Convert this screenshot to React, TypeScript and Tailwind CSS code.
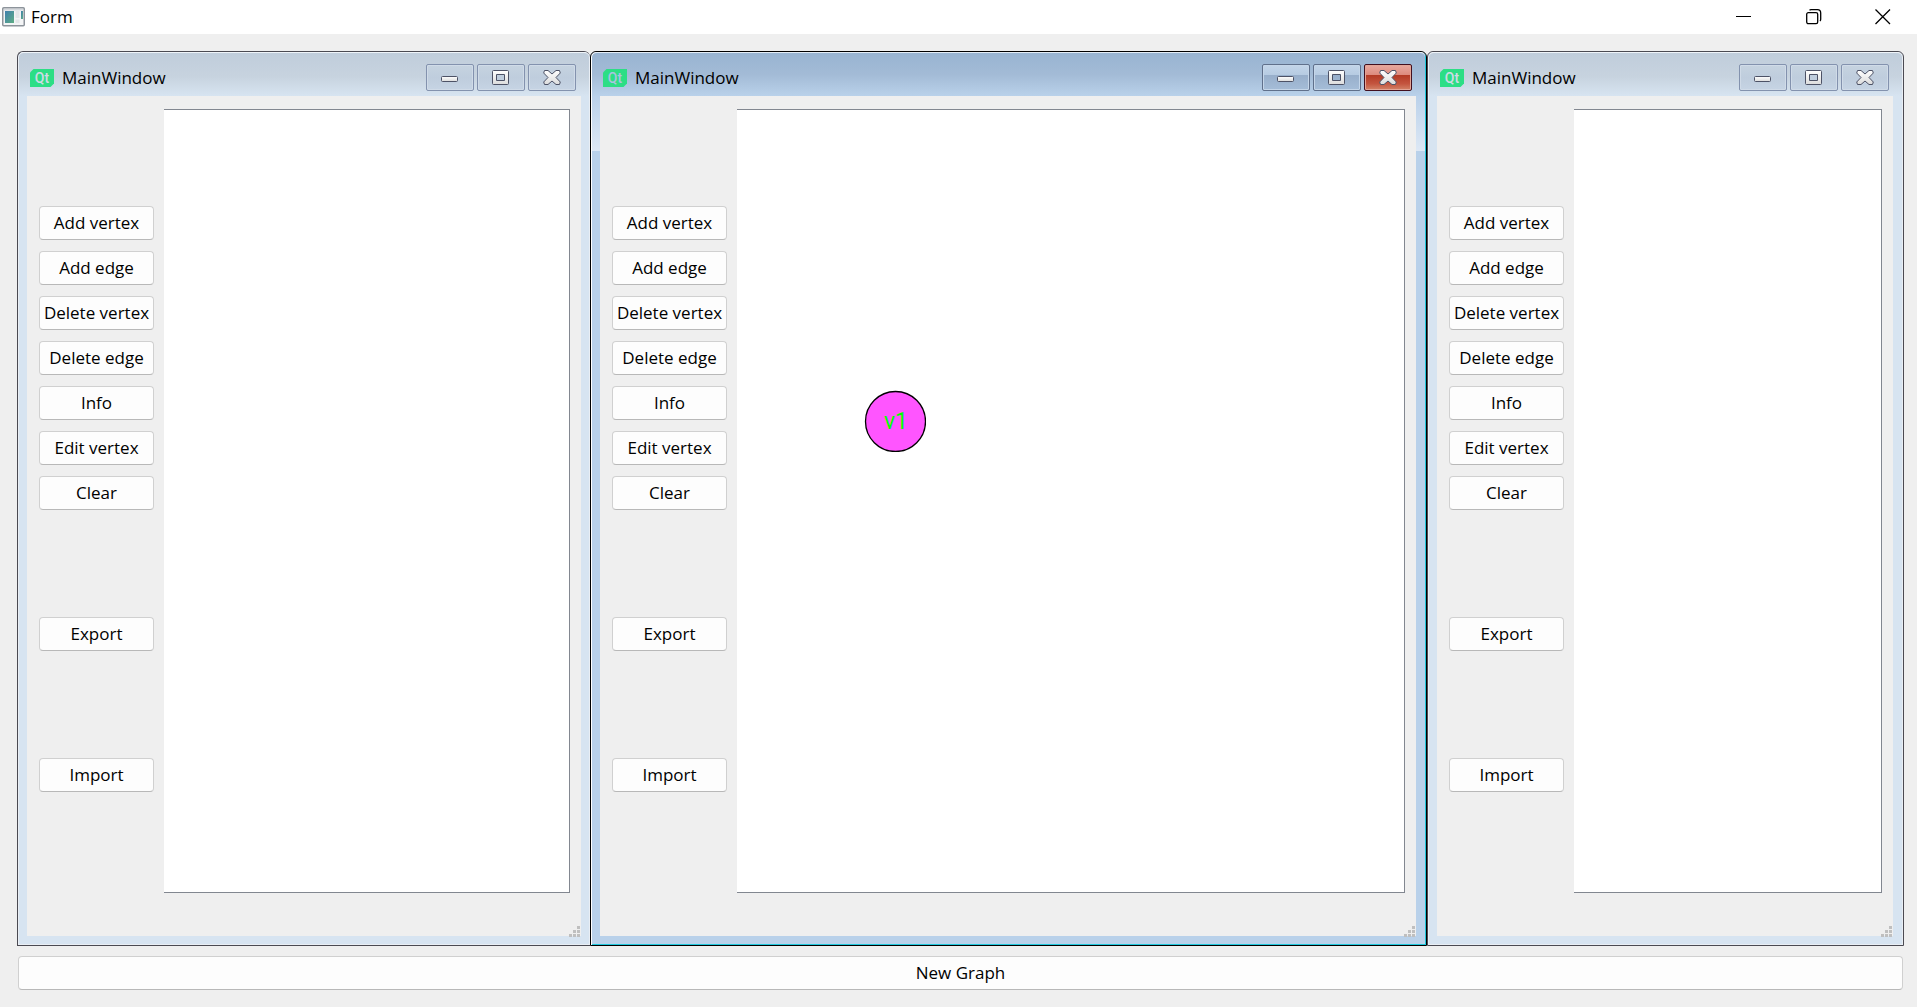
import React from "react";

type Tone = "active" | "inactive";

const editActions = [
  "Add vertex",
  "Add edge",
  "Delete vertex",
  "Delete edge",
  "Info",
  "Edit vertex",
  "Clear",
];

function PushButton({ children }: { children: React.ReactNode }) {
  return (
    <button
      type="button"
      className="h-[34px] w-full shrink-0 rounded border border-[#d0d0d0] border-b-[#b8b8b8] bg-[#fdfdfd] text-center text-[17px] leading-8 whitespace-nowrap text-black"
    >
      {children}
    </button>
  );
}

function FormIcon() {
  return (
    <svg width="24" height="20" viewBox="0 0 24 20" aria-hidden="true">
      <defs>
        <linearGradient id="formPane" x1="0" y1="0" x2="1" y2="1">
          <stop offset="0" stopColor="#3f7fae" />
          <stop offset="1" stopColor="#5fae84" />
        </linearGradient>
      </defs>
      <rect x="0.75" y="0.75" width="21.5" height="18" rx="1" fill="#f4f5f6" stroke="#8d949b" strokeWidth="1.5" />
      <rect x="2" y="2" width="19" height="1.5" fill="#d4d8dc" />
      <rect x="3" y="4" width="9" height="12" fill="url(#formPane)" />
      <rect x="13.5" y="4" width="4" height="7" fill="#e3e6e8" />
      <rect x="19" y="4" width="2" height="8" fill="url(#formPane)" />
      <rect x="13.5" y="12.5" width="4" height="3.5" fill="#e3e6e8" />
    </svg>
  );
}

function FormTitleBar() {
  return (
    <header className="flex h-[34px] shrink-0 items-center bg-white pl-[2px]">
      <FormIcon />
      <h1 className="ml-[5px] flex-1 text-[17px] leading-6 text-black">Form</h1>
      <button type="button" aria-label="Minimize" className="flex h-full w-[70px] items-center justify-center">
        <svg width="16" height="16" viewBox="0 0 16 16">
          <path d="M0 7.5H15" stroke="#000" />
        </svg>
      </button>
      <button type="button" aria-label="Restore" className="flex h-full w-[70px] items-center justify-center">
        <svg width="16" height="16" viewBox="0 0 16 16" fill="none" stroke="#000" strokeWidth="1.3">
          <rect x="0.7" y="3.7" width="11" height="11" rx="1.6" />
          <path d="M3.5 1.2C4 0.8 4.4 0.7 5 0.7H11.5C13.5 0.7 14.7 2 14.7 4V10.3C14.7 11 14.5 11.6 14 12" />
        </svg>
      </button>
      <button type="button" aria-label="Close" className="flex h-full w-[68px] items-center justify-center">
        <svg width="16" height="16" viewBox="0 0 16 16">
          <path d="M0.5 0.5L15 15M15 0.5L0.5 15" stroke="#000" strokeWidth="1.3" />
        </svg>
      </button>
    </header>
  );
}

function QtIcon({ tone }: { tone: Tone }) {
  return (
    <svg width="24" height="18" viewBox="0 0 24 18" aria-hidden="true">
      <path d="M3.5 0H24V14.5L20.5 18H0V3.5Z" fill="#2cde85" />
      <text
        x="12"
        y="14"
        textAnchor="middle"
        fontFamily="Roboto, sans-serif"
        fontSize="14"
        fontWeight="500"
        fill={tone === "active" ? "#a8c4df" : "#cfdae6"}
      >
        Qt
      </text>
    </svg>
  );
}

function GlyphGradient({ id }: { id: string }) {
  return (
    <defs>
      <linearGradient id={id} x1="0" y1="0" x2="0" y2="1">
        <stop offset="0" stopColor="#ffffff" />
        <stop offset="1" stopColor="#dcdcdc" />
      </linearGradient>
    </defs>
  );
}

function CaptionGlyph({ kind, id }: { kind: "min" | "max" | "close"; id: string }) {
  const fill = `url(#${id})`;
  return (
    <svg width="18" height="17" viewBox="0 0 18 17" stroke="#4d5266" strokeWidth="1">
      <GlyphGradient id={id} />
      {kind === "min" && <rect x="0.5" y="7.5" width="16" height="5" rx="1" fill={fill} />}
      {kind === "max" && (
        <path
          d="M1.5 1.5H15.5Q16.5 1.5 16.5 2.5V14.5Q16.5 15.5 15.5 15.5H1.5Q0.5 15.5 0.5 14.5V2.5Q0.5 1.5 1.5 1.5ZM4.5 5.5V11.5H12.5V5.5Z"
          fillRule="evenodd"
          fill={fill}
        />
      )}
      {kind === "close" && (
        <path
          d="M1.5 1.5H5L9 5L13 1.5H16.5L17.3 4L13 8.5L17.3 13L16.5 15.5H13L9 12L5 15.5H1.5L0.7 13L5 8.5L0.7 4Z"
          strokeLinejoin="round"
          fill={fill}
        />
      )}
    </svg>
  );
}

const captionStyles = {
  inactive:
    "border-[#8392ae] bg-[linear-gradient(#c6d3e0,#bfcddd_50%,#c6d4e4)] shadow-[inset_0_0_0_1px_#d0dbe8]",
  active:
    "border-[#60708b] bg-[linear-gradient(#c3d5e9,#b6cbe2_40%,#98afcb_42%,#a5bdd8)] shadow-[inset_0_0_0_1px_#c5d6e9]",
  close:
    "border-[#43101f] bg-[linear-gradient(#e9a99f,#dd8a7d_40%,#b43b26_42%,#c4553f_75%,#d38468)] shadow-[inset_0_0_0_1px_#e3a597]",
};

function CaptionButton({ kind, tone, id }: { kind: "min" | "max" | "close"; tone: Tone; id: string }) {
  const look =
    tone === "inactive" ? captionStyles.inactive : kind === "close" ? captionStyles.close : captionStyles.active;
  const label = kind === "min" ? "Minimize" : kind === "max" ? "Maximize" : "Close";
  return (
    <button
      type="button"
      aria-label={label}
      className={`flex h-[27px] w-12 items-center justify-center rounded-[2px] border ${look}`}
    >
      <CaptionGlyph kind={kind} id={`${id}-${kind}`} />
    </button>
  );
}

function SizeGrip() {
  return (
    <svg
      width="11"
      height="11"
      viewBox="0 0 11 11"
      fill="#bfbfbf"
      className="absolute right-px -bottom-px"
      aria-hidden="true"
    >
      <path d="M8 0h3v3h-3zM4 4h3v3h-3zM8 4h3v3h-3zM0 8h3v3h-3zM4 8h3v3h-3zM8 8h3v3h-3z" />
    </svg>
  );
}

const frameStyles = {
  active:
    "rounded-t-md border border-black bg-[#b9d1ea] shadow-[inset_1px_1px_0_#ffffff,inset_-1px_-1px_0_#1fc8dc] pr-[10px]",
  first: "rounded-t-md border border-r-0 border-[#4b4a52] bg-[#d7e4f1] shadow-[inset_0_0_0_1px_#e9eef4] pr-[9px]",
  last: "rounded-t-md border border-[#4b4a52] bg-[#d7e4f1] shadow-[inset_0_0_0_1px_#e9eef4] pr-[10px]",
};

const titleFill = {
  active: "bg-[linear-gradient(#98b4d2,#a3bbd6_50%,#b9d1ea)]",
  inactive: "bg-[linear-gradient(#c0cddb,#c7d3df_55%,#d7e4f1)]",
};

function GraphWindow({
  id,
  frame,
  children,
}: {
  id: string;
  frame: "first" | "active" | "last";
  children?: React.ReactNode;
}) {
  const tone: Tone = frame === "active" ? "active" : "inactive";
  return (
    <section className={`relative flex min-w-0 flex-col pb-[9px] pl-[9px] ${frameStyles[frame]}`}>
      <div
        className={`-ml-2 flex h-[44px] shrink-0 items-center rounded-t-[5px] border-t border-white/60 pt-1.5 pr-[13px] pl-[11px] ${
          frame === "first" ? "-mr-2" : "-mr-[9px]"
        } ${titleFill[tone]}`}
      >
        <QtIcon tone={tone} />
        <h2 className="ml-2 flex-1 truncate text-[17px] leading-6 text-black">MainWindow</h2>
        <div className="flex gap-[3px]">
          <CaptionButton kind="min" tone={tone} id={id} />
          <CaptionButton kind="max" tone={tone} id={id} />
          <CaptionButton kind="close" tone={tone} id={id} />
        </div>
      </div>
      {frame === "active" && (
        <>
          <div className="absolute top-[44px] left-px h-[55px] w-2 bg-linear-to-b from-[#bad1ea] to-[#dde8f5]" />
          <div className="absolute top-[44px] right-px h-[55px] w-[9px] bg-linear-to-b from-[#bad1ea] to-[#dde8f5]" />
        </>
      )}
      <div className="relative flex flex-1 gap-[10px] bg-[#efefef] pt-[13px] pr-[11px] pb-[43px] pl-3">
        <div className="flex w-[115px] shrink-0 flex-col">
          <div className="flex-1" />
          <div className="flex flex-col gap-[11px]">
            {editActions.map((label) => (
              <PushButton key={label}>{label}</PushButton>
            ))}
          </div>
          <div className="flex-1 pb-[10px]" />
          <PushButton>Export</PushButton>
          <div className="flex-1 pb-[10px]" />
          <PushButton>Import</PushButton>
          <div className="flex-1 pb-1" />
        </div>
        <div className="relative min-w-0 flex-1 overflow-hidden border border-l-0 border-[#828790] bg-white">
          {children}
        </div>
        <SizeGrip />
      </div>
    </section>
  );
}

function Vertex({ label }: { label: string }) {
  return (
    <svg width="62" height="62" viewBox="0 0 62 62" className="absolute top-[280px] left-[127px]">
      <circle cx="31.5" cy="31.5" r="30" fill="#ff55ff" stroke="#000" strokeWidth="1.3" />
      <text x="32" y="39" textAnchor="middle" fontFamily="Roboto, sans-serif" fontSize="23" fill="#00ff00">
        {label}
      </text>
    </svg>
  );
}

export default function App() {
  return (
    <div className="flex min-h-screen flex-col bg-[#efefef] font-['Open_Sans','Noto_Sans',sans-serif]">
      <FormTitleBar />
      <main className="flex flex-1 flex-col gap-[10px] pt-[17px] pr-[13px] pb-[17px] pl-[17px]">
        <div className="grid flex-1 grid-cols-[573fr_837fr_477fr]">
          <GraphWindow id="left" frame="first" />
          <GraphWindow id="middle" frame="active">
            <Vertex label="v1" />
          </GraphWindow>
          <GraphWindow id="right" frame="last" />
        </div>
        <div className="flex px-px">
          <PushButton>New Graph</PushButton>
        </div>
      </main>
    </div>
  );
}
